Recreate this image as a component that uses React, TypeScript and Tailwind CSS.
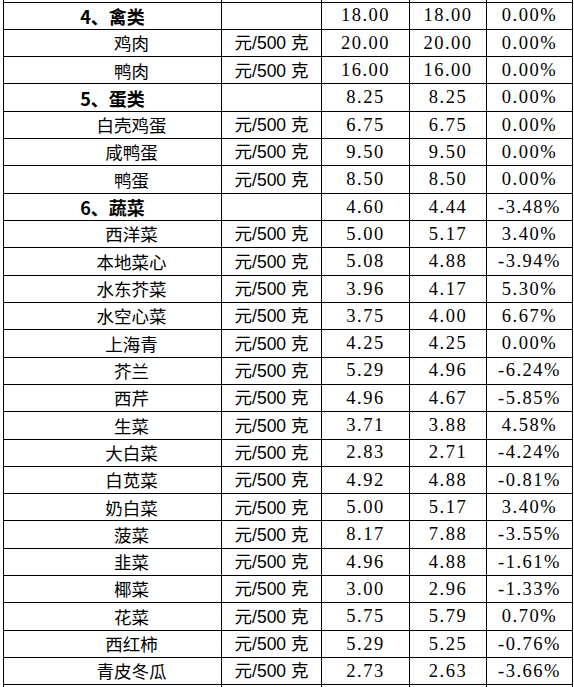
const rows: [string, boolean, string, string, string][] = [
  ["4、禽类", true, "18.00", "18.00", "0.00%"],
  ["鸡肉", false, "20.00", "20.00", "0.00%"],
  ["鸭肉", false, "16.00", "16.00", "0.00%"],
  ["5、蛋类", true, "8.25", "8.25", "0.00%"],
  ["白壳鸡蛋", false, "6.75", "6.75", "0.00%"],
  ["咸鸭蛋", false, "9.50", "9.50", "0.00%"],
  ["鸭蛋", false, "8.50", "8.50", "0.00%"],
  ["6、蔬菜", true, "4.60", "4.44", "-3.48%"],
  ["西洋菜", false, "5.00", "5.17", "3.40%"],
  ["本地菜心", false, "5.08", "4.88", "-3.94%"],
  ["水东芥菜", false, "3.96", "4.17", "5.30%"],
  ["水空心菜", false, "3.75", "4.00", "6.67%"],
  ["上海青", false, "4.25", "4.25", "0.00%"],
  ["芥兰", false, "5.29", "4.96", "-6.24%"],
  ["西芹", false, "4.96", "4.67", "-5.85%"],
  ["生菜", false, "3.71", "3.88", "4.58%"],
  ["大白菜", false, "2.83", "2.71", "-4.24%"],
  ["白苋菜", false, "4.92", "4.88", "-0.81%"],
  ["奶白菜", false, "5.00", "5.17", "3.40%"],
  ["菠菜", false, "8.17", "7.88", "-3.55%"],
  ["韭菜", false, "4.96", "4.88", "-1.61%"],
  ["椰菜", false, "3.00", "2.96", "-1.33%"],
  ["花菜", false, "5.75", "5.79", "0.70%"],
  ["西红柿", false, "5.29", "5.25", "-0.76%"],
  ["青皮冬瓜", false, "2.73", "2.63", "-3.66%"],
];

const num = "font-['Liberation_Serif','Noto_Sans_CJK_SC',serif] tracking-[1.5px] text-[18.5px]";

export default function App() {
  return (
    <div className="h-[687px] overflow-hidden bg-white text-black font-['Noto_Sans_CJK_SC',sans-serif]">
      <table className="ml-[3px] w-[569px] table-fixed border-collapse">
        <colgroup>
          <col className="w-[218px]" />
          <col className="w-[100px]" />
          <col className="w-[88px]" />
          <col className="w-[77px]" />
          <col className="w-[86px]" />
        </colgroup>
        <tbody>
          <tr className="h-[2px]">
            {[0, 1, 2, 3, 4].map((i) => (
              <td key={i} className="border-x border-b border-black p-0 leading-[0]" />
            ))}
          </tr>
          {rows.map(([name, head, a, b, c]) => (
            <tr key={name} className="h-[27.32px]">
              <td
                className={
                  head
                    ? "border border-black p-0 text-center text-[18px] font-bold leading-none"
                    : "border border-black p-0 pl-[38px] text-center text-[17.5px] leading-none"
                }
              >
                {name}
              </td>
              <td className="border border-black p-0 text-center text-[17.5px] leading-none whitespace-nowrap">
                {head ? "" : (
                  <>
                    元<span className="font-['Liberation_Sans',sans-serif]">/500 </span>克
                  </>
                )}
              </td>
              <td className={"border border-black p-0 text-center leading-none " + num}>{a}</td>
              <td className={"border border-black p-0 text-center leading-none " + num}>{b}</td>
              <td className={"border border-black p-0 text-center leading-none " + num}>{c}</td>
            </tr>
          ))}
          <tr className="h-[27px]">
            {[0, 1, 2, 3, 4].map((i) => (
              <td key={i} className="border border-black p-0" />
            ))}
          </tr>
        </tbody>
      </table>
    </div>
  );
}
